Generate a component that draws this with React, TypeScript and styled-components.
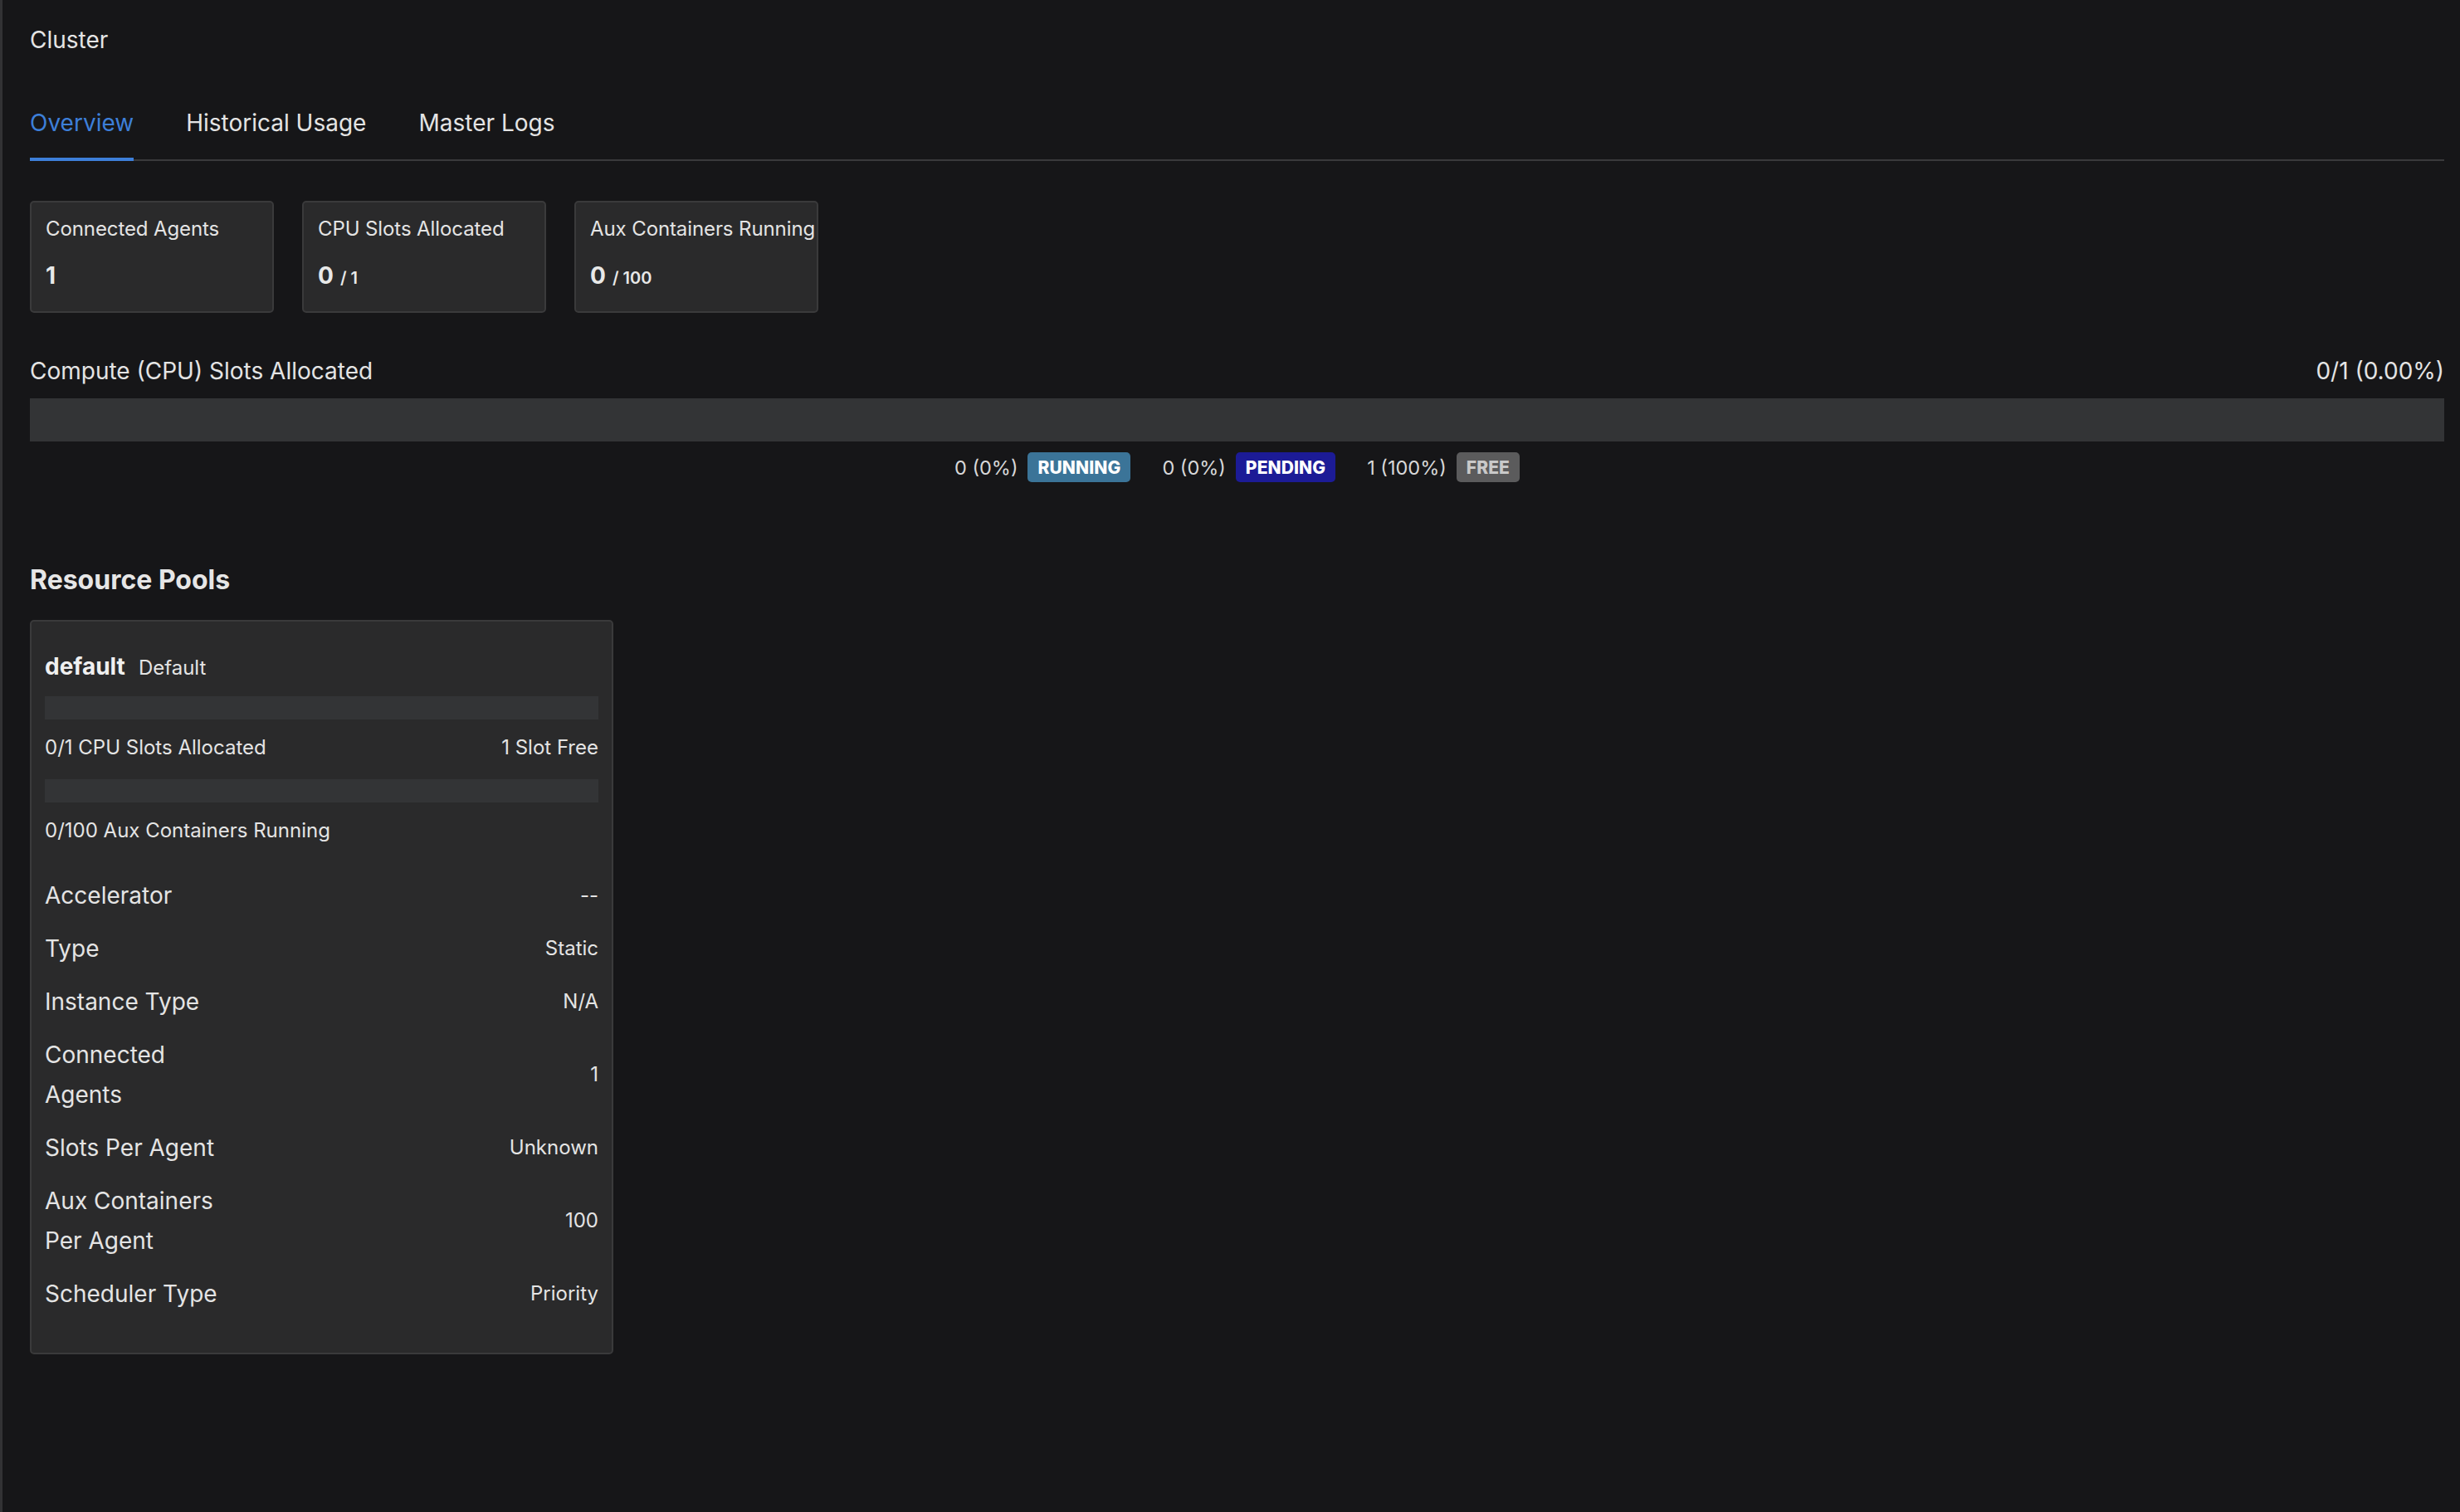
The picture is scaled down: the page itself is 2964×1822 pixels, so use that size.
import React from "react";
import styled, { createGlobalStyle } from "styled-components";

const GlobalStyle = createGlobalStyle`
  html, body {
    margin: 0;
    padding: 0;
    background: #161618;
  }
  body {
    font-family: Inter, "Noto Sans", "Liberation Sans", sans-serif;
    color: #e4e4e4;
    -webkit-font-smoothing: antialiased;
  }
  * { box-sizing: border-box; }
`;

const Page = styled.div`
  min-height: 100vh;
  border-left: 3px solid #323234;
  padding: 28px 19px 40px 33px;
  display: flex;
  flex-direction: column;
`;

const Title = styled.div`
  font-size: 28px;
  line-height: 40px;
  color: #e4e4e4;
`;

const TabList = styled.div`
  margin-top: 60px;
  display: flex;
  gap: 63px;
  border-bottom: 2px solid #3a3a3c;
`;

const Tab = styled.div<{ $active?: boolean }>`
  position: relative;
  font-size: 28px;
  line-height: 40px;
  padding-bottom: 24px;
  color: ${(p) => (p.$active ? "#3d7fd9" : "#e4e4e4")};
  &::after {
    content: "";
    display: ${(p) => (p.$active ? "block" : "none")};
    position: absolute;
    left: 0;
    right: 0;
    bottom: -2px;
    height: 4px;
    background: #3d7fd9;
  }
`;

const StatRow = styled.div`
  margin-top: 48px;
  display: flex;
  gap: 34px;
`;

const StatCard = styled.div`
  width: 294px;
  background: #2a2a2b;
  border: 2px solid #3a3a3b;
  border-radius: 5px;
  padding: 16px 2px 20px 17px;
  display: flex;
  flex-direction: column;
  gap: 20px;
`;

const StatLabel = styled.div`
  font-size: 24px;
  line-height: 32px;
  white-space: nowrap;
  letter-spacing: -0.1px;
  color: #e4e4e4;
`;

const StatValue = styled.div`
  font-size: 28px;
  line-height: 40px;
  font-weight: 700;
  color: #e8e8e8;
`;

const StatTotal = styled.span`
  font-size: 20px;
  font-weight: 600;
  margin-left: 8px;
`;

const SectionHeader = styled.div`
  margin-top: 50px;
  display: flex;
  justify-content: space-between;
  font-size: 28px;
  line-height: 40px;
  color: #e4e4e4;
`;

const Bar = styled.div<{ $height: number }>`
  height: ${(p) => p.$height}px;
  background: #333436;
`;

const ComputeBar = styled(Bar)`
  margin-top: 13px;
`;

const Legend = styled.div`
  margin-top: 13px;
  display: flex;
  justify-content: center;
  align-items: center;
  gap: 38px;
`;

const LegendItem = styled.div`
  display: flex;
  align-items: center;
  gap: 12px;
  font-size: 23.5px;
  color: #d8d8d8;
`;

const Badge = styled.span<{ $bg: string; $fg: string }>`
  display: inline-flex;
  align-items: center;
  height: 36px;
  padding: 0 12px;
  border-radius: 5px;
  background: ${(p) => p.$bg};
  color: ${(p) => p.$fg};
  font-size: 21px;
  font-weight: 800;
  letter-spacing: 0.1px;
`;

const PoolsTitle = styled.div`
  margin-top: 98px;
  font-size: 32px;
  line-height: 40px;
  font-weight: 700;
  color: #e6e6e6;
`;

const PoolCard = styled.div`
  margin-top: 28px;
  width: 703px;
  background: #2a2a2b;
  border: 2px solid #3a3a3b;
  border-radius: 5px;
  padding: 34px 16px 47px 16px;
  display: flex;
  flex-direction: column;
`;

const PoolHeader = styled.div`
  display: flex;
  align-items: baseline;
  gap: 16px;
  line-height: 40px;
`;

const PoolName = styled.span`
  font-size: 28px;
  font-weight: 700;
  color: #f0f0f0;
`;

const PoolDesc = styled.span`
  font-size: 24px;
  color: #e4e4e4;
`;

const PoolBar = styled(Bar)<{ $gap: number }>`
  margin-top: ${(p) => p.$gap}px;
`;

const UsageLine = styled.div`
  margin-top: 18px;
  display: flex;
  justify-content: space-between;
  font-size: 24px;
  line-height: 32px;
  color: #e4e4e4;
`;

const DetailList = styled.div`
  margin-top: 38px;
  display: flex;
  flex-direction: column;
  gap: 16px;
`;

const DetailRow = styled.div`
  display: grid;
  grid-template-columns: 1fr 2fr;
  align-items: center;
`;

const DetailLabel = styled.div`
  font-size: 28px;
  line-height: 48px;
  color: #e4e4e4;
`;

const DetailValue = styled.div`
  font-size: 24px;
  line-height: 48px;
  text-align: right;
  color: #e4e4e4;
`;

const stats = [
  { label: "Connected Agents", value: "1" },
  { label: "CPU Slots Allocated", value: "0", total: "1" },
  { label: "Aux Containers Running", value: "0", total: "100" },
];

const legend = [
  { text: "0 (0%)", label: "RUNNING", bg: "#3b7498", fg: "#ffffff" },
  { text: "0 (0%)", label: "PENDING", bg: "#1c1b96", fg: "#ffffff" },
  { text: "1 (100%)", label: "FREE", bg: "#5b5b5c", fg: "#c9c9c9" },
];

const details = [
  { label: "Accelerator", value: "--" },
  { label: "Type", value: "Static" },
  { label: "Instance Type", value: "N/A" },
  { label: "Connected Agents", value: "1" },
  { label: "Slots Per Agent", value: "Unknown" },
  { label: "Aux Containers Per Agent", value: "100" },
  { label: "Scheduler Type", value: "Priority" },
];

export default function App() {
  return (
    <>
      <GlobalStyle />
      <Page>
        <Title>Cluster</Title>
        <TabList>
          <Tab $active>Overview</Tab>
          <Tab>Historical Usage</Tab>
          <Tab>Master Logs</Tab>
        </TabList>

        <StatRow>
          {stats.map((s) => (
            <StatCard key={s.label}>
              <StatLabel>{s.label}</StatLabel>
              <StatValue>
                {s.value}
                {s.total && <StatTotal>/ {s.total}</StatTotal>}
              </StatValue>
            </StatCard>
          ))}
        </StatRow>

        <SectionHeader>
          <span>Compute (CPU) Slots Allocated</span>
          <span>0/1 (0.00%)</span>
        </SectionHeader>
        <ComputeBar $height={52} />
        <Legend>
          {legend.map((l) => (
            <LegendItem key={l.label}>
              <span>{l.text}</span>
              <Badge $bg={l.bg} $fg={l.fg}>
                {l.label}
              </Badge>
            </LegendItem>
          ))}
        </Legend>

        <PoolsTitle>Resource Pools</PoolsTitle>
        <PoolCard>
          <PoolHeader>
            <PoolName>default</PoolName>
            <PoolDesc>Default</PoolDesc>
          </PoolHeader>
          <PoolBar $height={28} $gap={14} />
          <UsageLine>
            <span>0/1 CPU Slots Allocated</span>
            <span>1 Slot Free</span>
          </UsageLine>
          <PoolBar $height={28} $gap={22} />
          <UsageLine>
            <span>0/100 Aux Containers Running</span>
          </UsageLine>
          <DetailList>
            {details.map((d) => (
              <DetailRow key={d.label}>
                <DetailLabel>{d.label}</DetailLabel>
                <DetailValue>{d.value}</DetailValue>
              </DetailRow>
            ))}
          </DetailList>
        </PoolCard>
      </Page>
    </>
  );
}
